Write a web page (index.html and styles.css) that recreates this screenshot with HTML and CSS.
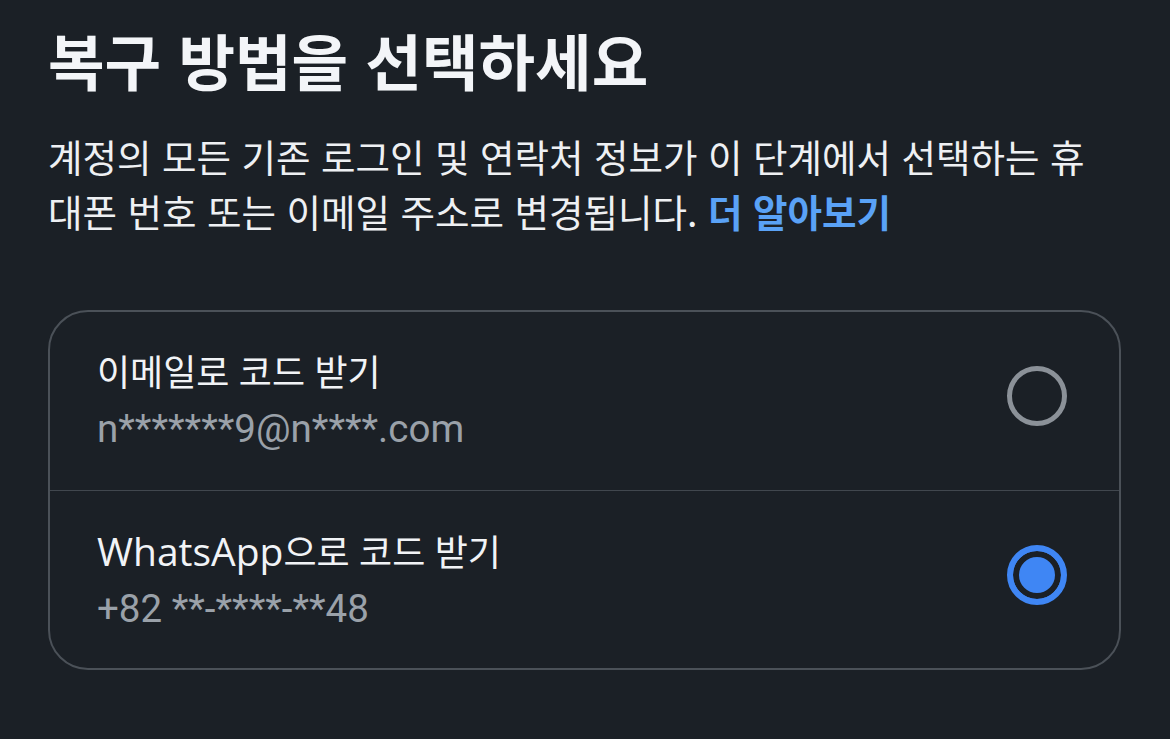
FILE: index.html
```html
<!DOCTYPE html>
<html lang="ko">
<head>
<meta charset="utf-8">
<link rel="stylesheet" href="styles.css">
</head>
<body>
<main class="page">
  <h1 class="title">복구 방법을 선택하세요</h1>
  <p class="desc">계정의 모든 기존 로그인 및 연락처 정보가 이 단계에서 선택하는 휴<br>대폰 번호 또는 이메일 주소로 변경됩니다. <a class="link" href="#">더 알아보기</a></p>
  <div class="card">
    <div class="option">
      <div class="option-text">
        <div class="option-title">이메일로 코드 받기</div>
        <div class="option-sub">n*******9@n****.com</div>
      </div>
      <span class="radio"></span>
    </div>
    <div class="option">
      <div class="option-text">
        <div class="option-title"><span class="brand">WhatsApp</span>으로 코드 받기</div>
        <div class="option-sub">+82 **-****-**48</div>
      </div>
      <span class="radio radio-on"></span>
    </div>
  </div>
</main>
</body>
</html>
```
FILE: styles.css
```css
html, body {
  margin: 0;
  padding: 0;
  background: #1b2026;
  height: 100%;
}
body {
  font-family: "Open Sans", "Noto Sans CJK KR", sans-serif;
  color: #f1f3f6;
}
.page {
  padding: 20px 49px 0 48px;
}
.title {
  margin: 0;
  font-family: "Noto Sans CJK KR", sans-serif;
  font-size: 61.5px;
  font-weight: 700;
  line-height: 80px;
  color: #f3f5f8;
}
.desc {
  margin: 28px 0 0;
  font-family: "Noto Sans CJK KR", sans-serif;
  font-size: 37.5px;
  line-height: 55px;
  color: #eef0f3;
}
.link {
  color: #5aa2f6;
  font-weight: 700;
  text-decoration: none;
}
.card {
  margin-top: 72px;
  border: 2px solid #4b5158;
  border-radius: 40px;
  overflow: hidden;
}
.option {
  display: flex;
  align-items: center;
  justify-content: space-between;
  height: 178px;
  padding: 0 52px 0 47px;
  box-sizing: border-box;
}
.option + .option {
  border-top: 1.5px solid #41474e;
}
.option-text {
  display: flex;
  flex-direction: column;
  gap: 8px;
}
.option-title {
  font-family: "Open Sans", "Noto Sans CJK KR", sans-serif;
  font-size: 36px;
  line-height: 48px;
  color: #f1f3f6;
}
.brand {
  font-size: 39px;
}
.option-sub {
  font-family: Roboto, "Noto Sans CJK KR", sans-serif;
  font-size: 38.5px;
  line-height: 48px;
  color: #9aa1a9;
}
.radio {
  width: 60px;
  height: 60px;
  box-sizing: border-box;
  border-radius: 50%;
  border: 5px solid #8b9198;
  flex: none;
  margin-bottom: 10px;
}
.radio-on {
  border: 6px solid #3f86f4;
  background: #3f86f4;
  box-shadow: inset 0 0 0 6px #1b2026;
}
```
